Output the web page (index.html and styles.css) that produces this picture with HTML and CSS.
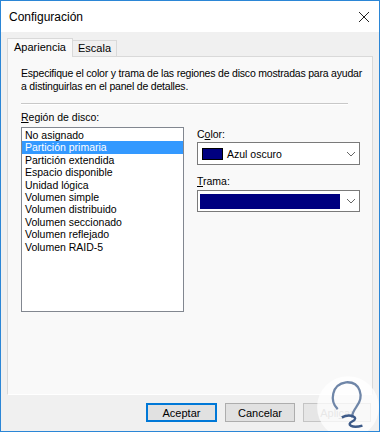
FILE: index.html
```html
<!DOCTYPE html>
<html lang="es">
<head>
  <meta charset="UTF-8" />
  <meta name="viewport" content="width=device-width, initial-scale=1.0"/>
  <title>Configuración</title>
  <link rel="stylesheet" href="styles.css">
</head>
<body>

  <div class="window">
    <div class="titlebar">
      <span class="title">Configuración</span>
      <svg class="close" width="12" height="12" viewBox="0 0 12 12">
        <path d="M1 1 L11 11 M11 1 L1 11" stroke="#222" stroke-width="1" fill="none"/>
      </svg>
    </div>

    <div class="content">
      <div class="tabs">
        <div class="tab active">Apariencia</div>
        <div class="tab">Escala</div>
      </div>

      <div class="panel">
        <p class="desc">Especifique el color y trama de las regiones de disco mostradas para ayudar<br>a distinguirlas en el panel de detalles.</p>
        <div class="separator"></div>

        <div class="columns">
          <div class="col-left">
            <div class="label"><u>R</u>egión de disco:</div>
            <ul class="listbox">
              <li>No asignado</li>
              <li class="selected">Partición primaria</li>
              <li>Partición extendida</li>
              <li>Espacio disponible</li>
              <li>Unidad lógica</li>
              <li>Volumen simple</li>
              <li>Volumen distribuido</li>
              <li>Volumen seccionado</li>
              <li>Volumen reflejado</li>
              <li>Volumen RAID-5</li>
            </ul>
          </div>

          <div class="col-right">
            <div class="label">C<u>o</u>lor:</div>
            <div class="combo">
              <span class="swatch"></span>
              <span class="combo-text">Azul oscuro</span>
              <svg class="chevron" width="10" height="6" viewBox="0 0 10 6">
                <path d="M1 1 L5 5 L9 1" stroke="#666" stroke-width="1" fill="none"/>
              </svg>
            </div>

            <div class="label label-gap"><u>T</u>rama:</div>
            <div class="combo combo-pattern">
              <span class="pattern"></span>
              <svg class="chevron" width="10" height="6" viewBox="0 0 10 6">
                <path d="M1 1 L5 5 L9 1" stroke="#666" stroke-width="1" fill="none"/>
              </svg>
            </div>
          </div>
        </div>
      </div>

      <div class="buttons">
        <button class="btn default">Aceptar</button>
        <button class="btn">Cancelar</button>
        <button class="btn disabled">Apli<u>c</u>ar</button>
      </div>
    </div>

    <!-- watermark logo in the corner -->
    <svg class="watermark" width="66" height="66" viewBox="0 0 64 64">
      <circle cx="32" cy="34" r="30" fill="rgba(255,255,255,0.75)"/>
      <path d="M22 36 C14 28 16 12 30 10 C44 9 48 24 40 34 C37 38 36 41 36 44" stroke="#6f86a8" stroke-width="2.2" fill="none"/>
      <path d="M26 44 C34 40 44 44 36 48 C30 51 36 55 46 52" stroke="#3d5a88" stroke-width="2.4" fill="none"/>
    </svg>
  </div>

</body>
</html>
```

FILE: styles.css
```css
* {
  box-sizing: border-box;
}

body {
  margin: 0;
  font-family: "Liberation Sans", Arial, sans-serif;
  font-size: 11px;
  color: #000;
}

.window {
  position: relative;
  width: 380px;
  height: 432px;
  border: 1px solid #2b86d6;
  background: #f0f0f0;
  display: flex;
  flex-direction: column;
  overflow: hidden;
}

.titlebar {
  height: 31px;
  background: #fff;
  display: flex;
  align-items: center;
  justify-content: space-between;
  padding: 0 8px 0 8px;
}

.title {
  font-size: 12px;
}

.close {
  margin-right: 1px;
}

.content {
  flex: 1;
  padding: 6px 8px 0 6px;
  display: flex;
  flex-direction: column;
}

.tabs {
  display: flex;
  align-items: flex-end;
  height: 18px;
  position: relative;
  z-index: 1;
}

.tab {
  height: 16px;
  padding: 0 5px;
  border: 1px solid #d9d9d9;
  border-bottom: none;
  background: #f0f0f0;
  line-height: 15px;
}

.tab.active {
  height: 19px;
  margin-bottom: -1px;
  padding: 0 6px;
  background: #f9f9f9;
  line-height: 16px;
}

.tab + .tab {
  border-left: none;
}

.panel {
  width: 366px;
  height: 339px;
  border: 1px solid #d9d9d9;
  border-bottom-color: #fff;
  background: #f9f9f9;
  padding: 10px 5px 0 13px;
  font-size: 10.5px;
}

.desc {
  margin: 0;
  line-height: 13px;
  letter-spacing: -0.2px;
  white-space: nowrap;
}

.separator {
  width: 327px;
  height: 2px;
  margin-top: 10px;
  border-top: 1px solid #c8c8c8;
  border-bottom: 1px solid #fff;
}

.columns {
  display: flex;
  gap: 13px;
  margin-top: 6px;
}

.label {
  line-height: 13px;
  height: 16px;
}

.col-left {
  width: 163px;
}

.listbox {
  list-style: none;
  margin: 0;
  padding: 1px 0 0 0;
  height: 185px;
  border: 1px solid #828790;
  background: #fff;
}

.listbox li {
  height: 12.4px;
  line-height: 12.4px;
  padding-left: 3px;
  white-space: nowrap;
}

.listbox li.selected {
  background: #3399ff;
  color: #fff;
}

.col-right {
  width: 163px;
  padding-top: 17px;
}

.col-right .label {
  height: 14px;
}

.col-right .label-gap {
  margin-top: 10px;
  height: 15px;
}

.combo {
  height: 23px;
  border: 1px solid #7a7a7a;
  background: #fff;
  display: flex;
  align-items: center;
  padding: 0 3px 0 4px;
}

.combo-pattern {
  height: 22px;
}

.swatch {
  width: 21px;
  height: 12px;
  border: 1px solid #000;
  background: #000080;
  margin-right: 4px;
}

.combo-text {
  flex: 1;
}

.pattern {
  flex: 1;
  height: 15px;
  margin-left: -2px;
  margin-right: 6px;
  background: #000080;
}

.chevron {
  display: block;
}

.buttons {
  display: flex;
  justify-content: flex-end;
  gap: 8px;
  margin-top: 8px;
}

.btn {
  height: 19px;
  width: 70px;
  padding: 0;
  font-family: "Liberation Sans", Arial, sans-serif;
  font-size: 11px;
  background: #e1e1e1;
  border: 1px solid #adadad;
  color: #000;
}

.btn.default {
  width: 71px;
  border: 2px solid #0078d7;
}

.btn.disabled {
  width: 68px;
  color: #a0a0a0;
  background: #e6e6e6;
  border-color: #c4c4c4;
}

.watermark {
  position: absolute;
  right: -2px;
  bottom: -7px;
}
```
